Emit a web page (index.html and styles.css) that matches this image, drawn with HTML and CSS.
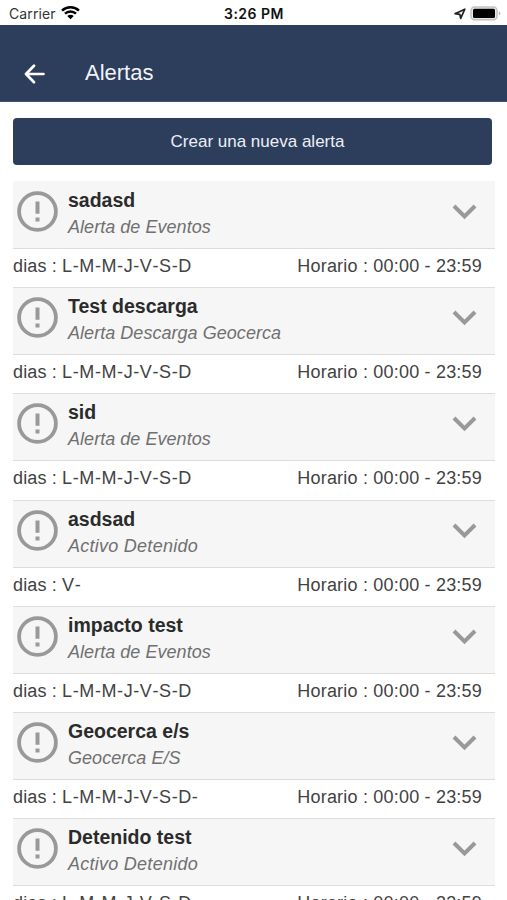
FILE: index.html
```html
<!DOCTYPE html>
<html lang="es">
<head>
  <meta charset="UTF-8" />
  <meta name="viewport" content="width=device-width, initial-scale=1.0"/>
  <title>Alertas</title>
  <link rel="stylesheet" href="styles.css">
</head>
<body>

  <div class="status-bar">
    <div class="status-left">
      <span class="carrier">Carrier</span>
      <svg class="wifi" viewBox="0 0 18 14" width="19" height="15">
        <path d="M1 5.2a11.5 11.5 0 0 1 16 0M3.8 8.1a7.5 7.5 0 0 1 10.4 0" fill="none" stroke="#000" stroke-width="2.4"/>
        <path d="M5.9 10.3a4.4 4.4 0 0 1 6.2 0L9 13.3z"/>
      </svg>
    </div>
    <span class="time">3:26 PM</span>
    <div class="status-right">
      <svg viewBox="0 0 12 12" width="12" height="12">
        <path d="M1 5.7L10.8 1.2L6.7 10.4L5.8 6.4z" fill="none" stroke="#222" stroke-width="1.7" stroke-linejoin="round"/>
      </svg>
      <svg viewBox="0 0 31 15" width="31" height="15">
        <rect x="1" y="1" width="26" height="12.8" rx="3.6" fill="#e8e8e8" stroke="#c2c2c2" stroke-width="1.5"/>
        <rect x="3" y="2.8" width="22" height="9.2" rx="1.5"/>
        <path d="M28.8 5.2q1.6.6 1.6 2.2t-1.6 2.2z" fill="#bbb"/>
      </svg>
    </div>
  </div>

  <div class="navbar">
    <svg class="back" viewBox="0 0 22 20" width="22" height="20">
      <path d="M19.5 10H2.5M10 1.8L2 10l8 8.2" fill="none" stroke="#fff" stroke-width="2.7" stroke-linecap="round" stroke-linejoin="round"/>
    </svg>
    <div class="navbar-title">Alertas</div>
  </div>

  <div class="container">
    <button class="btn">Crear una nueva alerta</button>
    <div class="alerts" id="alerts"></div>
  </div>

  <script src="script.js"></script>
</body>
</html>
```

FILE: styles.css
```css
* {
  box-sizing: border-box;
}

body {
  margin: 0;
  height: 900px;
  overflow: hidden;
  font-family: "Liberation Sans", Arial, sans-serif;
  background-color: #fff;
  color: #424242;
}

.status-bar {
  display: grid;
  grid-template-columns: 1fr auto 1fr;
  align-items: center;
  height: 25px;
  padding: 2px 6px 0 9px;
  font-family: Inter, sans-serif;
  font-size: 14px;
  color: #111;
}

.status-left,
.status-right {
  display: flex;
  align-items: center;
}

.status-left {
  gap: 5px;
}

.carrier {
  color: #333;
  letter-spacing: 0.1px;
}

.wifi {
  margin-top: -2px;
}

.time {
  margin-left: -2px;
  font-weight: 600;
  letter-spacing: 0.5px;
}

.status-right {
  justify-content: flex-end;
  gap: 4px;
}

.navbar {
  display: flex;
  align-items: center;
  height: 77px;
  padding: 22px 0 0 24px;
  background-color: #2c3e5c;
  border-bottom: 1px solid #44546f;
}

.navbar-title {
  margin: -2px 0 0 39px;
  font-size: 22px;
  color: #f1f3f8;
}

.container {
  padding: 16px 12px 0 13px;
}

.btn {
  display: block;
  width: 479px;
  height: 47px;
  padding: 0 0 0 10px;
  border: none;
  border-radius: 4px;
  background-color: #2c3e5c;
  color: #eceff5;
  font-family: inherit;
  font-size: 17px;
  cursor: pointer;
}

.alerts {
  margin-top: 15.9px;
}

.alert {
  height: 106.25px;
}

.alert-header {
  display: flex;
  height: 68px;
  padding: 6px 18px 0 4px;
  background-color: #f6f6f6;
  border-top: 1px solid #dedede;
  border-bottom: 1px solid #dcdcdc;
}

.alert:first-child .alert-header {
  border-top-color: #f6f6f6;
}

.alert-icon {
  margin-top: 3px;
}

.alert-text {
  flex: 1;
  margin-left: 10px;
}

.alert-name {
  font-size: 19.5px;
  line-height: 24px;
  font-weight: bold;
  color: #2b2b2b;
}

.alert-type {
  margin-top: 3px;
  font-size: 18px;
  line-height: 24px;
  font-style: italic;
  color: #707070;
  letter-spacing: 0.04px;
}

.alert-type.stopped {
  letter-spacing: 0.26px;
}

.chevron {
  margin: 16px 0.5px 0 0;
}

.alert-info {
  display: flex;
  justify-content: space-between;
  padding-right: 13px;
  font-size: 18px;
  line-height: 35px;
}

.label {
  letter-spacing: 0.15px;
}

.days {
  letter-spacing: 0.6px;
  font-kerning: none;
}

.schedule {
  letter-spacing: 0.2px;
}
```

FILE: script.js
```javascript
const alerts = [
  { name: "sadasd", type: "Alerta de Eventos", days: "L-M-M-J-V-S-D" },
  { name: "Test descarga", type: "Alerta Descarga Geocerca", days: "L-M-M-J-V-S-D" },
  { name: "sid", type: "Alerta de Eventos", days: "L-M-M-J-V-S-D" },
  { name: "asdsad", type: "Activo Detenido", days: "V-" },
  { name: "impacto test", type: "Alerta de Eventos", days: "L-M-M-J-V-S-D" },
  { name: "Geocerca e/s", type: "Geocerca E/S", days: "L-M-M-J-V-S-D-" },
  { name: "Detenido test", type: "Activo Detenido", days: "L-M-M-J-V-S-D" }
];

document.getElementById("alerts").innerHTML = alerts.map(a => `
  <div class="alert">
    <div class="alert-header">
      <svg class="alert-icon" viewBox="0 0 41 41" width="41" height="41">
        <circle cx="20.5" cy="20.5" r="18.4" fill="none" stroke="#999" stroke-width="3.8"/>
        <path d="M18.5 10.5h4v12.3h-4zM18.5 26.5h4v4h-4z" fill="#999"/>
      </svg>
      <div class="alert-text">
        <div class="alert-name">${a.name}</div>
        <div class="alert-type${a.type === "Activo Detenido" ? " stopped" : ""}">${a.type}</div>
      </div>
      <svg class="chevron" viewBox="0 0 25 16" width="25" height="16">
        <path d="M2 2l10.5 10.5L23 2" fill="none" stroke="#999" stroke-width="4"/>
      </svg>
    </div>
    <div class="alert-info">
      <span><span class="label">dias : </span><span class="days">${a.days}</span></span>
      <span class="schedule">Horario : 00:00 - 23:59</span>
    </div>
  </div>`).join("");
```
